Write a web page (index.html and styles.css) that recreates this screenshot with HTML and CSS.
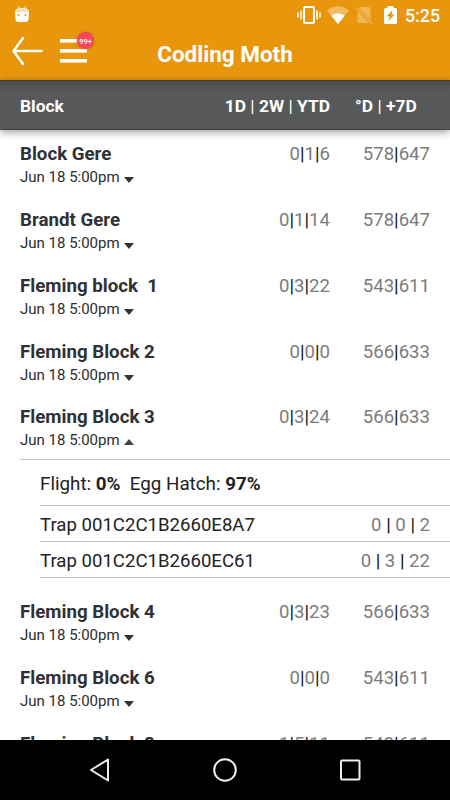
FILE: index.html
```html
<!DOCTYPE html>
<html lang="en">
<head>
<meta charset="utf-8">
<title>Codling Moth</title>
<link rel="stylesheet" href="styles.css">
</head>
<body>
<div class="phone">
  <header class="top">
    <div class="status">
      <svg class="droid" width="16" height="18" viewBox="0 0 16 18"><path d="M1 7.5Q1 4 5 3.2L3.3 0 6 3Q8 2.6 10 3L12.7 0 11 3.2Q15 4 15 7.5L14.5 14Q14.3 17 11.5 17H4.500Q1.700 17 1.500 14Z" fill="#fff"/><path d="M2 5Q8 2.500 14 5L13.500 8Q8 6 2.500 8Z" fill="#fbdcae"/><circle cx="4.500" cy="10" r="1" fill="#e8960c"/><circle cx="11.500" cy="10" r="1" fill="#e8960c"/></svg>
      <div class="system">
        <svg width="24" height="20" viewBox="0 0 24 20"><rect x="7" y="2" width="10" height="16" rx="1.500" fill="none" stroke="#fff" stroke-width="2"/><path d="M1 7.500v5M4 5.500v9M20 5.500v9M23 7.500v5" stroke="#fff" stroke-width="1.500"/></svg>
        <svg class="wifi" width="22" height="18" viewBox="0 0 22 18"><path d="M0 4.500Q11-4 22 4.500L11 18Z" fill="#f2bc66"/><path d="M4.300 9.800Q11 5 17.700 9.800L11 18Z" fill="#fff"/></svg>
        <svg class="sim" width="17" height="18" viewBox="0 0 17 18"><path d="M4 1H13q1.500 0 1.500 1.500V14.200L3 2ZM1.500 5 13 17H3q-1.500 0-1.500-1.500Z" fill="#f0b556"/><path d="M.5 2 16 17.500" stroke="#f0b556" stroke-width="1.500"/></svg>
        <svg class="battery" width="13" height="18" viewBox="0 0 13 18"><path d="M1.500 2H3.500V0h6v2h2Q13 2 13 3.500v13Q13 18 11.500 18h-10Q0 18 0 16.500v-13Q0 2 1.500 2Z" fill="#fff"/><path d="M8.500 4 2.500 10.500h3.500L4 15.500 10.500 8.500H7.500Z" fill="#e8960c"/></svg>
        <span class="clock">5:25</span>
      </div>
    </div>
    <div class="bar">
      <svg class="back" width="32" height="30" viewBox="0 0 32 30"><path d="M11 2 1.500 15 11 28M1.500 15H29.500" fill="none" stroke="#fff" stroke-width="2.500" stroke-linejoin="round" stroke-linecap="round"/></svg>
      <div class="menu"><i></i><i></i><i></i><span class="badge">99+</span></div>
      <h1>Codling Moth</h1>
    </div>
  </header>
  <div class="columns"><span>Block</span><span class="num">1D <s>|</s> 2W <s>|</s> YTD</span><span class="deg">°D <s>|</s> +7D</span></div>
  <main class="list">
    <div class="row"><b>Block Gere</b><span class="num">0<i>|</i>1<i>|</i>6</span><span class="num">578<i>|</i>647</span><small>Jun 18 5:00pm <em class="down"></em></small></div>
    <div class="row"><b>Brandt Gere</b><span class="num">0<i>|</i>1<i>|</i>14</span><span class="num">578<i>|</i>647</span><small>Jun 18 5:00pm <em class="down"></em></small></div>
    <div class="row"><b>Fleming block  1</b><span class="num">0<i>|</i>3<i>|</i>22</span><span class="num">543<i>|</i>611</span><small>Jun 18 5:00pm <em class="down"></em></small></div>
    <div class="row"><b>Fleming Block 2</b><span class="num">0<i>|</i>0<i>|</i>0</span><span class="num">566<i>|</i>633</span><small>Jun 18 5:00pm <em class="down"></em></small></div>
    <div class="row"><b>Fleming Block 3</b><span class="num">0<i>|</i>3<i>|</i>24</span><span class="num">566<i>|</i>633</span><small>Jun 18 5:00pm <em class="up"></em></small></div>
    <section class="detail">
      <div class="summary">Flight: <b>0%</b>  Egg Hatch: <b>97%</b></div>
      <div class="trap"><span>Trap 001C2C1B2660E8A7</span><span class="num">0 <i>|</i> 0 <i>|</i> 2</span></div>
      <div class="trap"><span>Trap 001C2C1B2660EC61</span><span class="num">0 <i>|</i> 3 <i>|</i> 22</span></div>
    </section>
    <div class="row"><b>Fleming Block 4</b><span class="num">0<i>|</i>3<i>|</i>23</span><span class="num">566<i>|</i>633</span><small>Jun 18 5:00pm <em class="down"></em></small></div>
    <div class="row"><b>Fleming Block 6</b><span class="num">0<i>|</i>0<i>|</i>0</span><span class="num">543<i>|</i>611</span><small>Jun 18 5:00pm <em class="down"></em></small></div>
    <div class="row"><b>Fleming Block 8</b><span class="num">1<i>|</i>5<i>|</i>11</span><span class="num">543<i>|</i>611</span></div>
  </main>
  <nav class="nav">
    <svg width="24" height="26" viewBox="0 0 24 26"><path d="M21 2.500V23.500L4 13Z" fill="none" stroke="#eee" stroke-width="2" stroke-linejoin="round"/></svg>
    <svg width="26" height="26" viewBox="0 0 26 26"><circle cx="13" cy="13" r="10.800" fill="none" stroke="#eee" stroke-width="2"/></svg>
    <svg width="24" height="26" viewBox="0 0 24 26"><rect x="2" y="3.500" width="18.500" height="19" rx="1" fill="none" stroke="#eee" stroke-width="2"/></svg>
  </nav>
</div>
</body>
</html>
```

FILE: styles.css
```css
* { box-sizing: border-box; }
body { margin: 0; font-family: Roboto, "Liberation Sans", sans-serif; }
svg { display: block; flex: none; }
i, em, s { font-style: normal; text-decoration: none; }
.phone { width: 450px; height: 800px; display: flex; flex-direction: column; overflow: hidden; background: #fff; }
.top { height: 80px; flex: none; background: #e8960c; color: #fff; }
.status { height: 30px; display: flex; justify-content: space-between; padding: 5px 10px 0 14px; }
.system { display: flex; height: 20px; }
.wifi { margin: 1px 0 0 6px; }
.sim { margin: 1px 0 0 7px; }
.battery { margin: 1px 0 0 11px; }
.clock { margin-left: 8px; width: 35px; font-size: 17.8px; font-weight: 500; line-height: 21px; }
.bar { height: 50px; display: flex; position: relative; padding: 6px 0 0 12px; }
.menu { width: 27px; height: 25px; margin: 3px 0 0 16px; position: relative; display: flex; flex-direction: column; gap: 6px; }
.menu i { height: 4px; background: #fff; flex: none; border-bottom: 1px solid #f5d49a; }
.badge { position: absolute; left: 17px; top: -7px; width: 17px; height: 17px; border-radius: 50%; background: #f8455a; font-size: 7.5px; font-weight: 500; line-height: 19px; text-align: center; box-shadow: 0 0 3px rgba(80,40,0,.35); }
h1 { position: absolute; left: 0; right: 0; top: 8px; margin: 0; text-align: center; font-size: 22.5px; line-height: 32px; font-weight: 700; }
.columns { height: 50px; flex: none; display: grid; grid-template-columns: 1fr 150px 100px; padding: 2px 20px 0; align-items: center; color: #fff; font-size: 17.4px; font-weight: 700; line-height: 22px; position: relative; background: linear-gradient(#4b4c4e, #58595b 10px); border-top: 1px solid #3c3d42; border-bottom: 1px solid #40414a; box-shadow: 0 2px 8px rgba(0,0,0,.4); }
.columns s { font-weight: 400; }
.deg { padding-left: 25px; }
.num { text-align: right; }
.list { flex: 1; min-height: 0; overflow: hidden; }
.row { height: 65.86px; display: grid; grid-template-columns: 1fr 100px 100px; grid-template-rows: 24px 22px; padding: 12px 20px 0; font-size: 18.7px; line-height: 24px; color: #303135; white-space: pre; }
.row b { font-weight: 700; }
.row .num, .trap .num { font-size: 18.6px; font-weight: 400; color: #7c7c7c; }
.num i { color: #111; font-weight: 400; }
.row small { grid-row: 2; font-size: 15px; line-height: 22px; color: #2c2c2c; }
.down, .up { display: inline-block; width: 0; height: 0; border: 5px solid transparent; margin-left: 1px; }
.down { border-top: 6px solid #333; border-bottom: 0; margin-bottom: -1px; }
.up { border-bottom: 6px solid #444; border-top: 0; }
.detail { height: 128px; margin: -0.3px 0 1px 20px; border-top: 1px solid #c4c4c4; padding-left: 20px; font-size: 18.6px; color: #222; }
.summary { height: 46px; line-height: 48px; border-bottom: 1px solid #c4c4c4; font-size: 18.8px; white-space: pre; }
.trap { height: 36px; line-height: 38px; border-bottom: 1px solid #c4c4c4; padding-right: 20px; display: flex; justify-content: space-between; }
.nav { height: 60px; flex: none; background: #000; display: flex; justify-content: center; align-items: center; gap: 101px; position: relative; }
```
